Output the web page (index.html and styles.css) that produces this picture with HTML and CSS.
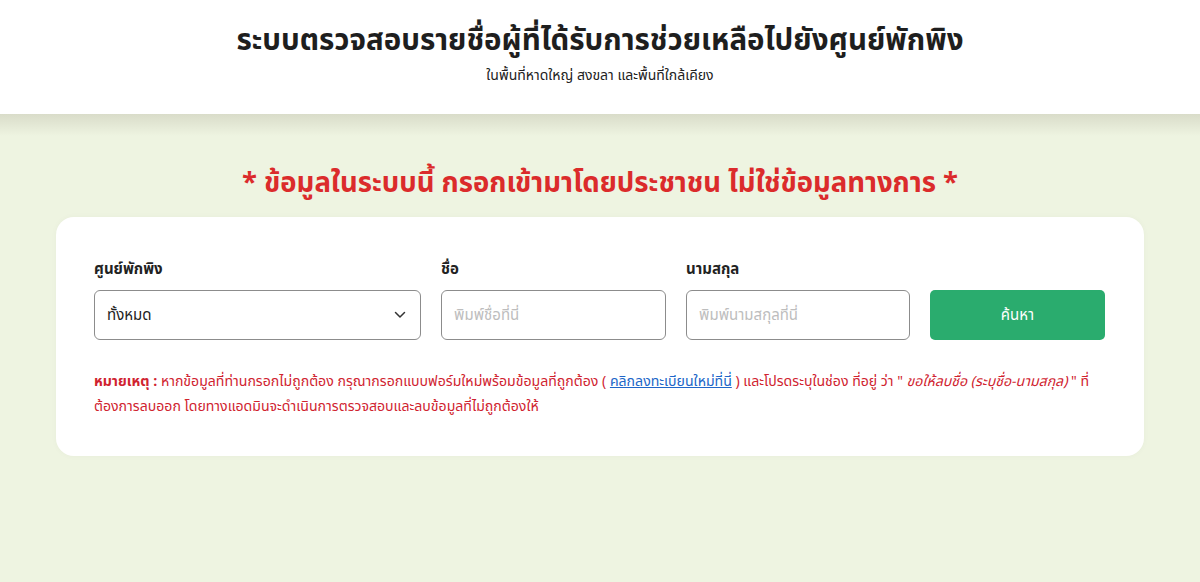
FILE: index.html
```html
<!DOCTYPE html>
<html lang="th">
<head>
<meta charset="utf-8">
<title>ระบบตรวจสอบรายชื่อ</title>
<link rel="stylesheet" href="styles.css">
</head>
<body>
<header class="top">
  <h1 class="title">ระบบตรวจสอบรายชื่อผู้ที่ได้รับการช่วยเหลือไปยังศูนย์พักพิง</h1>
  <p class="subtitle">ในพื้นที่หาดใหญ่ สงขลา และพื้นที่ใกล้เคียง</p>
</header>
<main class="main">
  <p class="warning">* ข้อมูลในระบบนี้ กรอกเข้ามาโดยประชาชน ไม่ใช่ข้อมูลทางการ *</p>
  <section class="card">
    <form class="form">
      <div class="field">
        <label class="label">ศูนย์พักพิง</label>
        <div class="select">
          <span>ทั้งหมด</span>
          <svg class="chev" width="12" height="8" viewBox="0 0 12 8"><path d="M1.5 1.5 L6 6 L10.5 1.5" fill="none" stroke="#333" stroke-width="1.5" stroke-linecap="round" stroke-linejoin="round"/></svg>
        </div>
      </div>
      <div class="field">
        <label class="label">ชื่อ</label>
        <div class="input placeholder">พิมพ์ชื่อที่นี่</div>
      </div>
      <div class="field">
        <label class="label">นามสกุล</label>
        <div class="input placeholder">พิมพ์นามสกุลที่นี่</div>
      </div>
      <div class="field">
        <span class="label">&nbsp;</span>
        <button type="button" class="btn">ค้นหา</button>
      </div>
    </form>
    <p class="note"><b>หมายเหตุ :</b> หากข้อมูลที่ท่านกรอกไม่ถูกต้อง กรุณากรอกแบบฟอร์มใหม่พร้อมข้อมูลที่ถูกต้อง ( <a class="link" href="#">คลิกลงทะเบียนใหม่ที่นี่</a> ) และโปรดระบุในช่อง ที่อยู่ ว่า " <i>ขอให้ลบชื่อ (ระบุชื่อ-นามสกุล)</i> " ที่ต้องการลบออก โดยทางแอดมินจะดำเนินการตรวจสอบและลบข้อมูลที่ไม่ถูกต้องให้</p>
  </section>
</main>
</body>
</html>
```

FILE: styles.css
```css
html, body {
  margin: 0;
  padding: 0;
}
body {
  background: #eef4e1;
  font-family: "Noto Sans Thai", "Kanit", "Prompt", "Loma", "Garuda", "Noto Sans", sans-serif;
  color: #222;
  height: 582px;
  overflow: hidden;
}
.top {
  background: #fff;
  height: 114px;
  box-sizing: border-box;
  padding-top: 21px;
  text-align: center;
  position: relative;
}
.top::after {
  content: "";
  position: absolute;
  left: 0;
  right: 0;
  top: 114px;
  height: 22px;
  background: linear-gradient(#d9dcc9, #eef4e1);
}
.title {
  margin: 0;
  font-size: 29.5px;
  font-weight: 700;
  color: #1e1e1e;
  line-height: 40px;
}
.subtitle {
  margin: 5px 0 0;
  font-size: 14px;
  line-height: 20px;
  color: #222;
}
.main {
  padding: 50px 56px 0;
}
.warning {
  margin: 0 0 13px;
  text-align: center;
  color: #db2b2b;
  font-size: 27.5px;
  font-weight: 700;
  line-height: 40px;
}
.card {
  background: #fff;
  border-radius: 18px;
  padding: 38px 39px 37px 38px;
  box-shadow: 0 0 6px rgba(0,0,0,0.03);
}
.form {
  display: grid;
  grid-template-columns: 327px 225px 224px 175px;
  gap: 20px;
}
.field {
  display: flex;
  flex-direction: column;
  gap: 5px;
}
.label {
  font-size: 15px;
  font-weight: 700;
  line-height: 30px;
  color: #222;
}
.select, .input {
  height: 50px;
  box-sizing: border-box;
  border: 1px solid #8c8c8c;
  border-radius: 6px;
  display: flex;
  align-items: center;
  padding: 0 12px;
  font-size: 15px;
}
.select {
  justify-content: space-between;
  padding-right: 14px;
}
.placeholder {
  color: #bdbdbd;
}
.btn {
  height: 50px;
  border: 0;
  border-radius: 5px;
  background: #2aac6e;
  color: #fff;
  font-family: inherit;
  font-size: 15px;
}
.note {
  margin: 29px 0 0;
  font-size: 14.1px;
  line-height: 25px;
  color: #d0232f;
}
.link {
  color: #2066c8;
}
```
